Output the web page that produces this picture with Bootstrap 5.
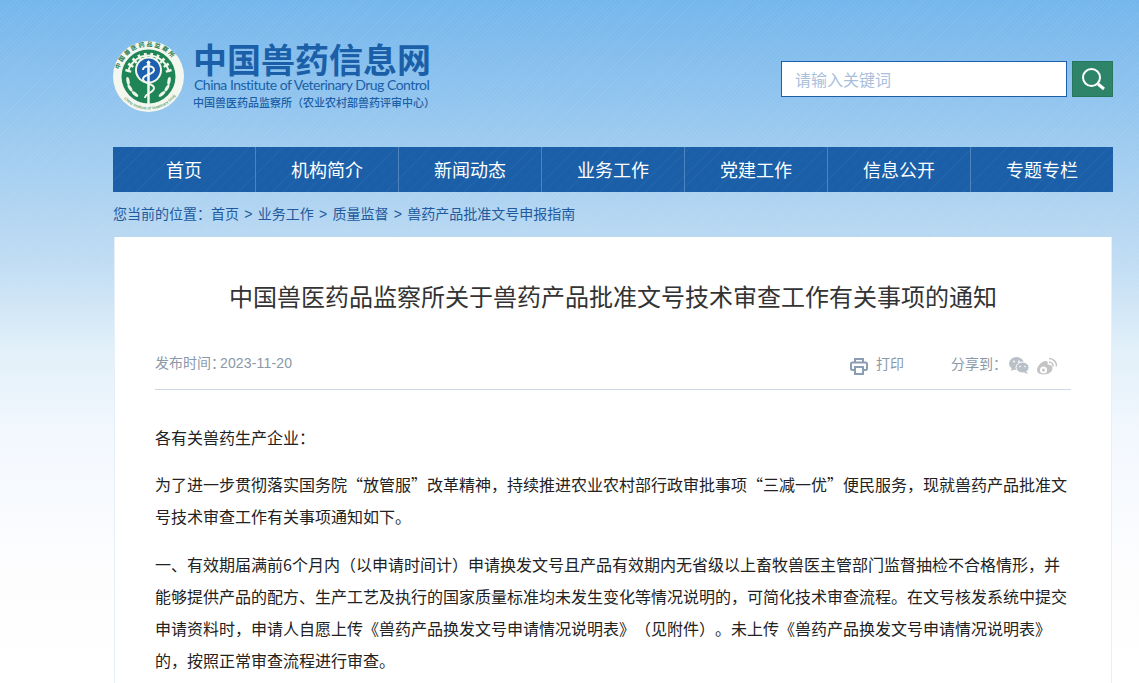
<!DOCTYPE html>
<html lang="zh">
<head>
<meta charset="UTF-8">
<title>中国兽药信息网</title>
<link href="https://cdn.jsdelivr.net/npm/bootstrap@5.3.0/dist/css/bootstrap.min.css" rel="stylesheet">
<style>
body { font-family: "Noto Sans CJK SC", "Liberation Sans", sans-serif; text-spacing-trim: space-all; color: #333; overflow: hidden;
  background: repeating-linear-gradient(135deg, rgba(255,255,255,.05) 0 1px, transparent 1px 3px) 0 0 / 100% 300px no-repeat, linear-gradient(180deg, #74b6ec 0, #c0dcf3 262px, #e2f0f9 350px, #f3f8fe 437px, #fdfdfe 570px, #fff 683px) no-repeat #fff; }
.wrap-main { width: 1000px; margin-left: 113px; }
.top-head { height: 147px; padding-top: 41px; }
.logo-txt { color: #1a5fa8; margin-left: 9px; }
.logo-cn { font-weight: 700; font-size: 34px; line-height: 36px; }
.logo-en { font-family: Lato, "Liberation Sans", sans-serif; font-size: 14px; line-height: 16px; letter-spacing: -.5px; padding-left: 1px; }
.logo-sub { font-size: 11px; line-height: 14px; margin-top: 2px; font-weight: 500; }
.search-box { margin-top: 20px; }
.search-in { width: 286px; height: 36px; border: 1px solid #1a5fa8; background: #fff; font-size: 16px; color: #a9c0dd; padding: 0 13px; line-height: 34px; }
.search-btn { width: 41px; height: 36px; background: #2d8468; margin-left: 5px; border: 1px solid #27775d; }
.main-nav { height: 45px; background: repeating-linear-gradient(135deg, rgba(255,255,255,.03) 0 1px, transparent 1px 8px), #1a5fa8; }
.nav-cell { width: 143px; color: #fff; font-size: 18px; line-height: 45px; text-align: center; border-right: 1px solid #4d84bf; }
.nav-cell:last-child { border-right: 0; width: 142px; }
.crumb { font-size: 14px; color: #1f5a9c; height: 45px; line-height: 43px; }
.crumb-sep { font-family: "Liberation Sans", sans-serif; margin: 0 5.3px; }
.art { background: #fff; margin-left: 1px; width: 998px; padding: 0 40px; height: 446px; overflow: hidden; border-left: 1px solid #e6f0f9; border-right: 1px solid #e6f0f9; }
.art-title { font-size: 24px; font-weight: 400; color: #333; text-align: center; padding-top: 43px; line-height: 32px; margin: 0; height: 86px; }
.art-meta { height: 67px; border-bottom: 1px solid #ced9e4; font-size: 14px; color: #8a98a8; padding-top: 29px; line-height: 20px; }
.art-date { font-family: "Liberation Sans", sans-serif; letter-spacing: .15px; margin-left: -5px; }
.meta-ico { margin-top: 5px; }
.meta-label { padding-top: 1px; }
.meta-share { margin-left: 47px; }
.share-ico { margin: 4px 14px 0 2px; }
.art-body { padding-top: 31px; font-size: 16px; line-height: 32px; color: #222; }
.art-body p { margin: 0 0 15px; }
.art-body p:last-child { margin-top: 16px; }
</style>
</head>
<body>
<div class="wrap-main">
  <div class="top-head d-flex justify-content-between">
    <div class="d-flex">
      <svg width="71" height="71" viewBox="0 0 71 71">
        <circle cx="35.5" cy="35.5" r="35.5" fill="#f4f7ee"/>
        <path id="logoTop" d="M5.500 35.500a30 30 0 0 1 60 0" fill="none"/>
        <path id="logoBot" d="M2.500 35.500a33 33 0 0 0 66 0" fill="none"/>
        <text font-size="6" fill="#1f7a50" font-weight="700" letter-spacing="1.600"><textPath href="#logoTop" startOffset="7">中国兽医药品监察所</textPath></text>
        <text font-size="4" fill="#1f7a50" font-family="Liberation Sans"><textPath href="#logoBot" startOffset="24">China Institute of Veterinary Drug</textPath></text>
        <circle cx="35.5" cy="35.5" r="27" fill="#1f8557"/>
        <path d="M15 31a21 21 0 0 1 41 0" fill="none" stroke="#eef5e9" stroke-width="2"/>
        <path d="M15 31a21 21 0 0 1 41 0" fill="none" stroke="#eef5e9" stroke-width="6" stroke-dasharray="2.500 3.500"/>
        <circle cx="35.5" cy="29" r="13.500" fill="#f4f7ee"/>
        <circle cx="35.5" cy="29" r="11.500" fill="#1c5fae"/>
        <path d="M35.5 20V66" stroke="#f4f7ee" stroke-width="2.500"/>
        <path d="M30 29c0-5 11-5 11 0s-11 4-11 9 11 4 11 9-9 5-9 10" fill="none" stroke="#f4f7ee" stroke-width="2"/>
        <path d="M35.5 19l1 2h2l-2 1 1 2-2-1-2 1 1-2-2-1h2z" fill="#fff"/>
        <g fill="#eef5e9">
          <ellipse cx="15" cy="40" rx="1.600" ry="4" transform="rotate(-10 15 40)"/><ellipse cx="17" cy="47" rx="1.600" ry="4" transform="rotate(-30 17 47)"/><ellipse cx="22" cy="53" rx="1.600" ry="4" transform="rotate(-50 22 53)"/>
          <ellipse cx="56" cy="40" rx="1.600" ry="4" transform="rotate(10 56 40)"/><ellipse cx="54" cy="47" rx="1.600" ry="4" transform="rotate(30 54 47)"/><ellipse cx="49" cy="53" rx="1.600" ry="4" transform="rotate(50 49 53)"/>
        </g>
      </svg>
      <div class="logo-txt">
        <div class="logo-cn">中国兽药信息网</div>
        <div class="logo-en">China Institute of Veterinary Drug Control</div>
        <div class="logo-sub">中国兽医药品监察所（农业农村部兽药评审中心）</div>
      </div>
    </div>
    <div class="search-box d-flex align-self-start">
      <div class="search-in">请输入关键词</div>
      <div class="search-btn d-flex align-items-center justify-content-center">
        <svg width="26" height="26" viewBox="0 0 26 26" fill="none" stroke="#fff"><circle cx="11.500" cy="11.500" r="8.500" stroke-width="2"/><path d="M18 18l6 5" stroke-width="3"/></svg>
      </div>
    </div>
  </div>
  <div class="main-nav d-flex">
    <div class="nav-cell">首页</div><div class="nav-cell">机构简介</div><div class="nav-cell">新闻动态</div><div class="nav-cell">业务工作</div><div class="nav-cell">党建工作</div><div class="nav-cell">信息公开</div><div class="nav-cell">专题专栏</div>
  </div>
  <div class="crumb">您当前的位置：首页<span class="crumb-sep">&gt;</span>业务工作<span class="crumb-sep">&gt;</span>质量监督<span class="crumb-sep">&gt;</span>兽药产品批准文号申报指南</div>
  <div class="art">
    <h1 class="art-title">中国兽医药品监察所关于兽药产品批准文号技术审查工作有关事项的通知</h1>
    <div class="art-meta d-flex">
      <div>发布时间：<span class="art-date">2023-11-20</span></div>
      <div class="ms-auto d-flex align-items-start">
        <svg width="18" height="18" viewBox="0 0 18 18" class="meta-ico" fill="none" stroke="#8a9db5" stroke-width="2"><path d="M5 5V2h8v3M4 13H2.500a1.500 1.500 0 0 1-1.500-1.500V7a1.500 1.500 0 0 1 1.500-1.500h13A1.500 1.500 0 0 1 17 7v4.500a1.500 1.500 0 0 1-1.500 1.500H14"/><rect x="5" y="10" width="8" height="7"/></svg>
        <span class="ms-2 meta-label">打印</span>
      </div>
      <div class="meta-share d-flex align-items-start">
        <span class="meta-label">分享到：</span>
        <svg class="share-ico" width="48" height="20" viewBox="0 0 48 20">
          <g fill="#b9c0c7"><ellipse cx="7.500" cy="7.500" rx="7.500" ry="6.500"/><path d="M3 11l-1 4 4-2z"/></g>
          <ellipse cx="13.500" cy="11.500" rx="6.500" ry="5.500" fill="#b9c0c7" stroke="#fff"/>
          <path d="M17 15l2 3-4-1.500z" fill="#b9c0c7"/>
          <g fill="#fff"><circle cx="5" cy="5.500" r="1"/><circle cx="10" cy="5.500" r="1"/><circle cx="11" cy="10.500" r=".8"/><circle cx="16" cy="10.500" r=".8"/></g>
          <path d="M28 14c0-4 5-9 9-9 2 0 2 2 1.500 3.500 3 0 5 1.500 5 4 0 3-4 6-8.500 6S28 17 28 14z" fill="#c4c4c4"/>
          <circle cx="34.500" cy="14" r="3.500" fill="#fff"/><circle cx="34.500" cy="14" r="1.500" fill="#c4c4c4"/>
          <path d="M40 6a4 4 0 0 1 4 4.500M40 2.500a7.500 7.500 0 0 1 7.500 8" fill="none" stroke="#c4c4c4" stroke-width="1.500"/>
        </svg>
      </div>
    </div>
    <div class="art-body">
      <p>各有关兽药生产企业：</p>
      <p>为了进一步贯彻落实国务院“放管服”改革精神，持续推进农业农村部行政审批事项“三减一优”便民服务，现就兽药产品批准文号技术审查工作有关事项通知如下。</p>
      <p>一、有效期届满前6个月内（以申请时间计）申请换发文号且产品有效期内无省级以上畜牧兽医主管部门监督抽检不合格情形，并能够提供产品的配方、生产工艺及执行的国家质量标准均未发生变化等情况说明的，可简化技术审查流程。在文号核发系统中提交申请资料时，申请人自愿上传《兽药产品换发文号申请情况说明表》（见附件）。未上传《兽药产品换发文号申请情况说明表》的，按照正常审查流程进行审查。</p>
    </div>
  </div>
</div>
</body>
</html>
